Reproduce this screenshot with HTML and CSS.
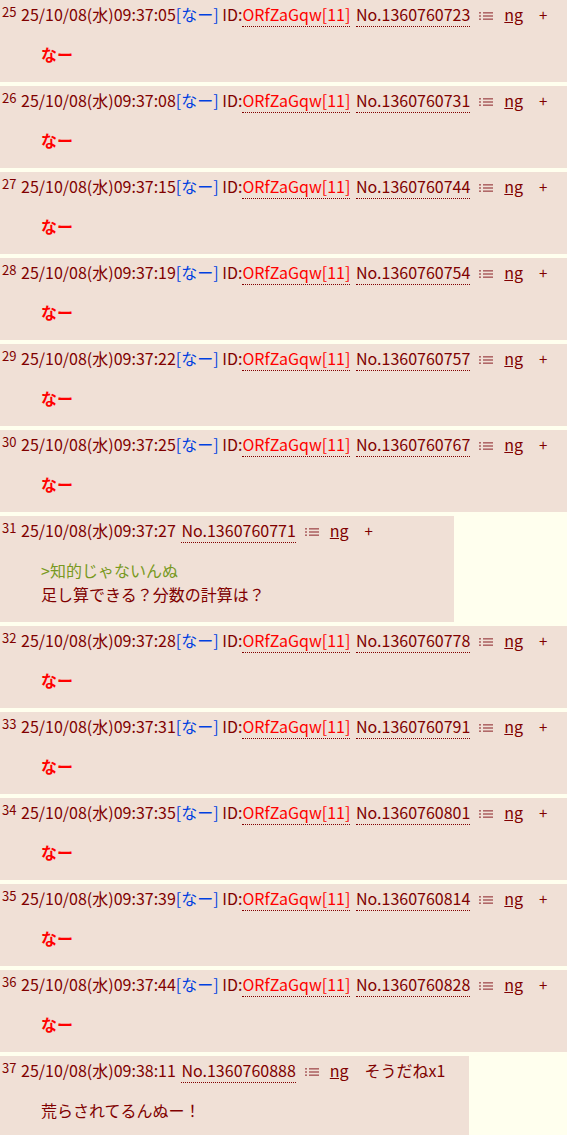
FILE: index.html
```html
<!DOCTYPE html>
<html lang="ja">
<head>
<meta charset="utf-8">
<link rel="stylesheet" href="styles.css">
</head>
<body>
<div class="thread">
  <div class="post">
    <div class="hd"><span class="rsc">25</span> <span class="dt">25/10/08(水)09:37:05</span><span class="mail">[なー]</span> ID:<span class="id">ORfZaGqw[11]</span> <span class="no">No.1360760723</span><span class="ic"><svg width="14" height="12" viewBox="0 0 14 12"><g fill="#b06868"><rect x="0" y="2" width="2" height="1.6"/><rect x="0" y="5.2" width="2" height="1.6"/><rect x="0" y="8.4" width="2" height="1.6"/><rect x="4" y="2" width="10" height="1.6"/><rect x="4" y="5.2" width="10" height="1.6"/><rect x="4" y="8.4" width="10" height="1.6"/></g></svg></span><span class="ng">ng</span><span class="plus">+</span></div>
    <div class="body red">なー</div>
  </div>
  <div class="post">
    <div class="hd"><span class="rsc">26</span> <span class="dt">25/10/08(水)09:37:08</span><span class="mail">[なー]</span> ID:<span class="id">ORfZaGqw[11]</span> <span class="no">No.1360760731</span><span class="ic"><svg width="14" height="12" viewBox="0 0 14 12"><g fill="#b06868"><rect x="0" y="2" width="2" height="1.6"/><rect x="0" y="5.2" width="2" height="1.6"/><rect x="0" y="8.4" width="2" height="1.6"/><rect x="4" y="2" width="10" height="1.6"/><rect x="4" y="5.2" width="10" height="1.6"/><rect x="4" y="8.4" width="10" height="1.6"/></g></svg></span><span class="ng">ng</span><span class="plus">+</span></div>
    <div class="body red">なー</div>
  </div>
  <div class="post">
    <div class="hd"><span class="rsc">27</span> <span class="dt">25/10/08(水)09:37:15</span><span class="mail">[なー]</span> ID:<span class="id">ORfZaGqw[11]</span> <span class="no">No.1360760744</span><span class="ic"><svg width="14" height="12" viewBox="0 0 14 12"><g fill="#b06868"><rect x="0" y="2" width="2" height="1.6"/><rect x="0" y="5.2" width="2" height="1.6"/><rect x="0" y="8.4" width="2" height="1.6"/><rect x="4" y="2" width="10" height="1.6"/><rect x="4" y="5.2" width="10" height="1.6"/><rect x="4" y="8.4" width="10" height="1.6"/></g></svg></span><span class="ng">ng</span><span class="plus">+</span></div>
    <div class="body red">なー</div>
  </div>
  <div class="post">
    <div class="hd"><span class="rsc">28</span> <span class="dt">25/10/08(水)09:37:19</span><span class="mail">[なー]</span> ID:<span class="id">ORfZaGqw[11]</span> <span class="no">No.1360760754</span><span class="ic"><svg width="14" height="12" viewBox="0 0 14 12"><g fill="#b06868"><rect x="0" y="2" width="2" height="1.6"/><rect x="0" y="5.2" width="2" height="1.6"/><rect x="0" y="8.4" width="2" height="1.6"/><rect x="4" y="2" width="10" height="1.6"/><rect x="4" y="5.2" width="10" height="1.6"/><rect x="4" y="8.4" width="10" height="1.6"/></g></svg></span><span class="ng">ng</span><span class="plus">+</span></div>
    <div class="body red">なー</div>
  </div>
  <div class="post">
    <div class="hd"><span class="rsc">29</span> <span class="dt">25/10/08(水)09:37:22</span><span class="mail">[なー]</span> ID:<span class="id">ORfZaGqw[11]</span> <span class="no">No.1360760757</span><span class="ic"><svg width="14" height="12" viewBox="0 0 14 12"><g fill="#b06868"><rect x="0" y="2" width="2" height="1.6"/><rect x="0" y="5.2" width="2" height="1.6"/><rect x="0" y="8.4" width="2" height="1.6"/><rect x="4" y="2" width="10" height="1.6"/><rect x="4" y="5.2" width="10" height="1.6"/><rect x="4" y="8.4" width="10" height="1.6"/></g></svg></span><span class="ng">ng</span><span class="plus">+</span></div>
    <div class="body red">なー</div>
  </div>
  <div class="post">
    <div class="hd"><span class="rsc">30</span> <span class="dt">25/10/08(水)09:37:25</span><span class="mail">[なー]</span> ID:<span class="id">ORfZaGqw[11]</span> <span class="no">No.1360760767</span><span class="ic"><svg width="14" height="12" viewBox="0 0 14 12"><g fill="#b06868"><rect x="0" y="2" width="2" height="1.6"/><rect x="0" y="5.2" width="2" height="1.6"/><rect x="0" y="8.4" width="2" height="1.6"/><rect x="4" y="2" width="10" height="1.6"/><rect x="4" y="5.2" width="10" height="1.6"/><rect x="4" y="8.4" width="10" height="1.6"/></g></svg></span><span class="ng">ng</span><span class="plus">+</span></div>
    <div class="body red">なー</div>
  </div>
  <div class="post tall w31">
    <div class="hd"><span class="rsc">31</span> <span class="dt">25/10/08(水)09:37:27</span> <span class="no">No.1360760771</span><span class="ic"><svg width="14" height="12" viewBox="0 0 14 12"><g fill="#b06868"><rect x="0" y="2" width="2" height="1.6"/><rect x="0" y="5.2" width="2" height="1.6"/><rect x="0" y="8.4" width="2" height="1.6"/><rect x="4" y="2" width="10" height="1.6"/><rect x="4" y="5.2" width="10" height="1.6"/><rect x="4" y="8.4" width="10" height="1.6"/></g></svg></span><span class="ng">ng</span><span class="plus">+</span></div>
    <div class="body"><span class="quote">&gt;知的じゃないんぬ</span><br>足し算できる？分数の計算は？</div>
  </div>
  <div class="post">
    <div class="hd"><span class="rsc">32</span> <span class="dt">25/10/08(水)09:37:28</span><span class="mail">[なー]</span> ID:<span class="id">ORfZaGqw[11]</span> <span class="no">No.1360760778</span><span class="ic"><svg width="14" height="12" viewBox="0 0 14 12"><g fill="#b06868"><rect x="0" y="2" width="2" height="1.6"/><rect x="0" y="5.2" width="2" height="1.6"/><rect x="0" y="8.4" width="2" height="1.6"/><rect x="4" y="2" width="10" height="1.6"/><rect x="4" y="5.2" width="10" height="1.6"/><rect x="4" y="8.4" width="10" height="1.6"/></g></svg></span><span class="ng">ng</span><span class="plus">+</span></div>
    <div class="body red">なー</div>
  </div>
  <div class="post">
    <div class="hd"><span class="rsc">33</span> <span class="dt">25/10/08(水)09:37:31</span><span class="mail">[なー]</span> ID:<span class="id">ORfZaGqw[11]</span> <span class="no">No.1360760791</span><span class="ic"><svg width="14" height="12" viewBox="0 0 14 12"><g fill="#b06868"><rect x="0" y="2" width="2" height="1.6"/><rect x="0" y="5.2" width="2" height="1.6"/><rect x="0" y="8.4" width="2" height="1.6"/><rect x="4" y="2" width="10" height="1.6"/><rect x="4" y="5.2" width="10" height="1.6"/><rect x="4" y="8.4" width="10" height="1.6"/></g></svg></span><span class="ng">ng</span><span class="plus">+</span></div>
    <div class="body red">なー</div>
  </div>
  <div class="post">
    <div class="hd"><span class="rsc">34</span> <span class="dt">25/10/08(水)09:37:35</span><span class="mail">[なー]</span> ID:<span class="id">ORfZaGqw[11]</span> <span class="no">No.1360760801</span><span class="ic"><svg width="14" height="12" viewBox="0 0 14 12"><g fill="#b06868"><rect x="0" y="2" width="2" height="1.6"/><rect x="0" y="5.2" width="2" height="1.6"/><rect x="0" y="8.4" width="2" height="1.6"/><rect x="4" y="2" width="10" height="1.6"/><rect x="4" y="5.2" width="10" height="1.6"/><rect x="4" y="8.4" width="10" height="1.6"/></g></svg></span><span class="ng">ng</span><span class="plus">+</span></div>
    <div class="body red">なー</div>
  </div>
  <div class="post">
    <div class="hd"><span class="rsc">35</span> <span class="dt">25/10/08(水)09:37:39</span><span class="mail">[なー]</span> ID:<span class="id">ORfZaGqw[11]</span> <span class="no">No.1360760814</span><span class="ic"><svg width="14" height="12" viewBox="0 0 14 12"><g fill="#b06868"><rect x="0" y="2" width="2" height="1.6"/><rect x="0" y="5.2" width="2" height="1.6"/><rect x="0" y="8.4" width="2" height="1.6"/><rect x="4" y="2" width="10" height="1.6"/><rect x="4" y="5.2" width="10" height="1.6"/><rect x="4" y="8.4" width="10" height="1.6"/></g></svg></span><span class="ng">ng</span><span class="plus">+</span></div>
    <div class="body red">なー</div>
  </div>
  <div class="post">
    <div class="hd"><span class="rsc">36</span> <span class="dt">25/10/08(水)09:37:44</span><span class="mail">[なー]</span> ID:<span class="id">ORfZaGqw[11]</span> <span class="no">No.1360760828</span><span class="ic"><svg width="14" height="12" viewBox="0 0 14 12"><g fill="#b06868"><rect x="0" y="2" width="2" height="1.6"/><rect x="0" y="5.2" width="2" height="1.6"/><rect x="0" y="8.4" width="2" height="1.6"/><rect x="4" y="2" width="10" height="1.6"/><rect x="4" y="5.2" width="10" height="1.6"/><rect x="4" y="8.4" width="10" height="1.6"/></g></svg></span><span class="ng">ng</span><span class="plus">+</span></div>
    <div class="body red">なー</div>
  </div>
  <div class="post w37">
    <div class="hd"><span class="rsc">37</span> <span class="dt">25/10/08(水)09:38:11</span> <span class="no">No.1360760888</span><span class="ic"><svg width="14" height="12" viewBox="0 0 14 12"><g fill="#b06868"><rect x="0" y="2" width="2" height="1.6"/><rect x="0" y="5.2" width="2" height="1.6"/><rect x="0" y="8.4" width="2" height="1.6"/><rect x="4" y="2" width="10" height="1.6"/><rect x="4" y="5.2" width="10" height="1.6"/><rect x="4" y="8.4" width="10" height="1.6"/></g></svg></span><span class="ng">ng</span><span class="sod">そうだねx1</span></div>
    <div class="body">荒らされてるんぬー！</div>
  </div>
</div>
</body>
</html>
```
FILE: styles.css
```css
html, body {
  margin: 0;
  padding: 0;
  background: #ffffee;
}
body {
  font-family: "Noto Sans CJK JP", "Noto Sans", sans-serif;
  font-size: 16px;
  color: #800000;
  overflow: hidden;
}
.thread {
  display: flex;
  flex-direction: column;
  gap: 4px;
}
.post {
  background: #f0e0d6;
  height: 82px;
  box-sizing: border-box;
  padding: 0 0 0 2px;
  white-space: nowrap;
}
.post.tall { height: 106px; }
.w31 { width: 454px; }
.w37 { width: 469px; }
.hd {
  line-height: 24px;
}
.rsc {
  font-size: 13px;
  vertical-align: 4px;
  margin-right: 1px;
}
.mail { color: #0040e0; }
.id {
  color: #ff0000;
  border-bottom: 1px dotted #800000;
}
.no {
  margin-left: 2px;
  border-bottom: 1px dotted #800000;
}
.ic {
  display: inline-block;
  margin: 0 11px 0 9px;
  vertical-align: -1px;
}
.ng {
  text-decoration: underline;
}
.plus {
  font-size: 15px;
  margin-left: 16px;
}
.sod {
  margin-left: 16px;
}
.body {
  margin: 15px 0 0 39px;
  line-height: 24px;
}
.red {
  color: #ff0000;
  font-weight: bold;
}
.quote { color: #789922; }
```
